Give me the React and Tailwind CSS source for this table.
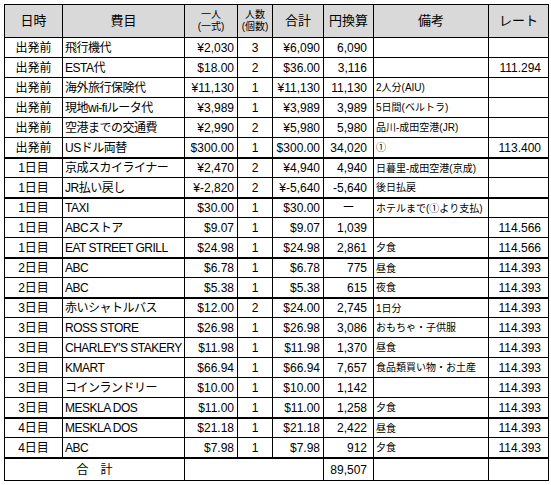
const cols = [
  "w-[58px]",
  "w-[122px]",
  "w-[53px]",
  "w-[35px]",
  "w-[51px]",
  "w-[50px]",
  "w-[115px]",
  "w-[60px]",
];

// [日時, 費目, 一人, 人数, 合計, 円換算, 備考, レート, thick top]
const rows = [
  ["出発前", "飛行機代", "¥2,030", "3", "¥6,090", "6,090", "", ""],
  ["出発前", "ESTA代", "$18.00", "2", "$36.00", "3,116", "", "111.294"],
  ["出発前", "海外旅行保険代", "¥11,130", "1", "¥11,130", "11,130", "2人分(AIU)", ""],
  ["出発前", "現地wi-fiルータ代", "¥3,989", "1", "¥3,989", "3,989", "5日間(ベルトラ)", ""],
  ["出発前", "空港までの交通費", "¥2,990", "2", "¥5,980", "5,980", "品川-成田空港(JR)", ""],
  ["出発前", "USドル両替", "$300.00", "1", "$300.00", "34,020", "①", "113.400"],
  ["1日目", "京成スカイライナー", "¥2,470", "2", "¥4,940", "4,940", "日暮里-成田空港(京成)", "", true],
  ["1日目", "JR払い戻し", "¥-2,820", "2", "¥-5,640", "-5,640", "後日払戻", ""],
  ["1日目", "TAXI", "$30.00", "1", "$30.00", "ー", "ホテルまで(①より支払)", "", true],
  ["1日目", "ABCストア", "$9.07", "1", "$9.07", "1,039", "", "114.566"],
  ["1日目", "EAT STREET GRILL", "$24.98", "1", "$24.98", "2,861", "夕食", "114.566"],
  ["2日目", "ABC", "$6.78", "1", "$6.78", "775", "昼食", "114.393", true],
  ["2日目", "ABC", "$5.38", "1", "$5.38", "615", "夜食", "114.393"],
  ["3日目", "赤いシャトルバス", "$12.00", "2", "$24.00", "2,745", "1日分", "114.393", true],
  ["3日目", "ROSS STORE", "$26.98", "1", "$26.98", "3,086", "おもちゃ・子供服", "114.393"],
  ["3日目", "CHARLEY'S STAKERY", "$11.98", "1", "$11.98", "1,370", "昼食", "114.393"],
  ["3日目", "KMART", "$66.94", "1", "$66.94", "7,657", "食品類買い物・お土産", "114.393"],
  ["3日目", "コインランドリー", "$10.00", "1", "$10.00", "1,142", "", "114.393"],
  ["3日目", "MESKLA DOS", "$11.00", "1", "$11.00", "1,258", "夕食", "114.393"],
  ["4日目", "MESKLA DOS", "$21.18", "1", "$21.18", "2,422", "昼食", "114.393", true],
  ["4日目", "ABC", "$7.98", "1", "$7.98", "912", "夕食", "114.393"],
];

function Cell({ w, className = "", children }) {
  return (
    <div className={`${w} shrink-0 flex items-center overflow-hidden whitespace-nowrap border-l border-black ${className}`}>
      {children}
    </div>
  );
}

function Row({ r }) {
  const thick = r[8];
  return (
    <div className={`flex h-[20px] ${thick ? "border-t-2" : "border-t"} border-black`}>
      <Cell w={cols[0]} className="justify-center text-[12px]">{r[0]}</Cell>
      <Cell w={cols[1]} className="pl-[2px] text-[12px] tracking-[-0.5px]">{r[1]}</Cell>
      <Cell w={cols[2]} className="justify-end pr-[3px] text-[12px]">{r[2]}</Cell>
      <Cell w={cols[3]} className="justify-center text-[12px]">{r[3]}</Cell>
      <Cell w={cols[4]} className="justify-end pr-[3px] text-[12px]">{r[4]}</Cell>
      <Cell
        w={cols[5]}
        className={`${r[5] === "ー" ? "justify-center" : "justify-end pr-[6px]"} text-[12px]`}
      >
        {r[5]}
      </Cell>
      <Cell w={cols[6]} className="pl-[2px] text-[10px]">{r[6]}</Cell>
      <Cell w={cols[7]} className="justify-end pr-[7px] text-[12px]">{r[7]}</Cell>
    </div>
  );
}

export default function App() {
  return (
    <div
      className="min-h-[485px] w-[551px] bg-white pl-[4px] pt-[4px] text-black"
      style={{ fontFamily: '"Liberation Sans", "Noto Sans CJK JP", sans-serif' }}
    >
      <div className="w-[545px] border-b border-r border-black">
        <div className="flex h-[33px] border-t border-black bg-[#d9d9d9]">
          <Cell w={cols[0]} className="justify-center text-[13px]">日時</Cell>
          <Cell w={cols[1]} className="justify-center text-[13px]">費目</Cell>
          <Cell w={cols[2]} className="flex-col justify-center text-[10px] leading-[12px]">
            <span>一人</span>
            <span>(一式)</span>
          </Cell>
          <Cell w={cols[3]} className="flex-col justify-center text-[10px] leading-[12px]">
            <span>人数</span>
            <span>(個数)</span>
          </Cell>
          <Cell w={cols[4]} className="justify-center text-[13px]">合計</Cell>
          <Cell w={cols[5]} className="justify-center text-[13px]">円換算</Cell>
          <Cell w={cols[6]} className="justify-center text-[13px]">備考</Cell>
          <Cell w={cols[7]} className="justify-center text-[13px]">レート</Cell>
        </div>
        {rows.map((r, i) => (
          <Row key={i} r={r} />
        ))}
        <div className="flex h-[23px] border-t-2 border-black">
          <Cell w="w-[180px]" className="justify-center text-[12px]">合　計</Cell>
          <Cell w="w-[139px]" />
          <Cell w={cols[5]} className="justify-end pr-[6px] text-[12px]">89,507</Cell>
          <Cell w={cols[6]} />
          <Cell w={cols[7]} />
        </div>
      </div>
    </div>
  );
}
